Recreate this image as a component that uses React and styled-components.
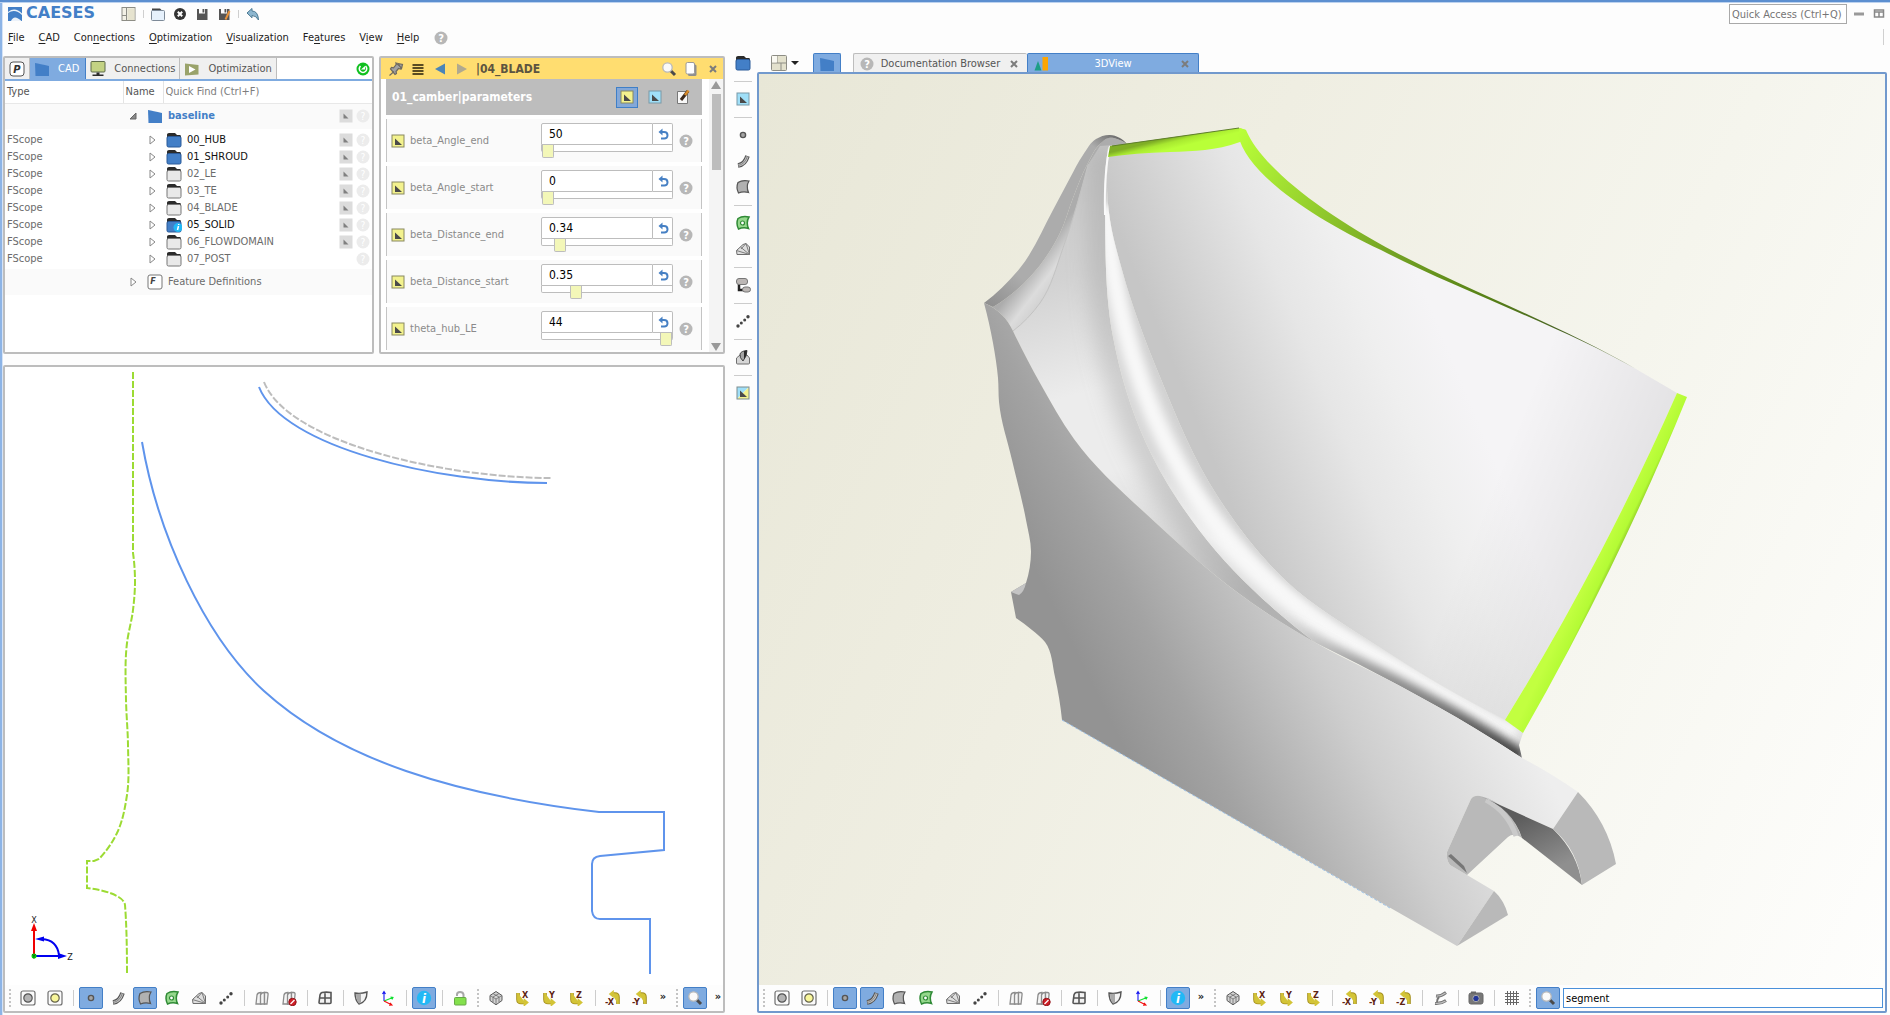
import React from 'react';
import styled, { createGlobalStyle, css } from 'styled-components';

const GlobalStyle = createGlobalStyle`
  * { box-sizing: border-box; }
  body {
    margin: 0;
    background: #fdfdfd;
    color: #3c3c3c;
    font-family: "DejaVu Sans Condensed", "Noto Sans", sans-serif;
    font-size: 11px;
    line-height: 16px;
  }
  button, input { font: inherit; color: inherit; }
  button { padding: 0; border: 0; background: none; cursor: pointer; }
  a { color: inherit; text-decoration: none; }
  svg { display: block; flex: none; }
`;

/* ---------- icons ---------- */

const yellow = '#f3f28e';
const cyan = '#9fdff8';

const triangle = <path d="M5 5.500v6.500h7z" fill="#4a4a4a" />;
const surfacePath = 'M3 3.500C6 1.500 9 1 14 2C11.500 6 12 10 13.500 13.500C10 12.500 7 12.500 3.500 14C1.500 10 1.500 7 3 3.500z';
const sheets = (
  <g fill="#f4f4f4" stroke="#8c8c8c" strokeWidth="1.3">
    <path d="M2 14L3 5Q3.500 2.500 7 2.500V14z" />
    <path d="M6.500 14V5Q7 2.500 10.500 2.500V14z" />
    <path d="M10.500 14V2.500H12.500Q14.500 2.500 14 5L13 14z" />
  </g>
);
const elbowDown = <path d="M3 3v6.500q0 3 3 3h4" fill="none" stroke="#a48f1c" strokeWidth="3.600" />;
const elbowDownLight = <path d="M3 3v6.500q0 3 3 3h4M9.500 10l3 2.500l-3 2.500z" fill="#d3c437" stroke="#d3c437" strokeWidth="1.800" />;
const elbowUp = <path d="M13 14V7q0-3-3-3H7" fill="none" stroke="#a48f1c" strokeWidth="3.600" />;
const elbowUpLight = <path d="M13 14V7q0-3-3-3H7M8 1.500L5 4l3 2.500z" fill="#d3c437" stroke="#d3c437" strokeWidth="1.600" />;

const axisDown = letter => (
  <>
    {elbowDown}{elbowDownLight}
    <text x="7" y="8" fontSize="9" fontWeight="bold" fill="#5e2412">{letter}</text>
  </>
);
const axisUp = letter => (
  <>
    {elbowUp}{elbowUpLight}
    <text x="0" y="15" fontSize="9" fontWeight="bold" fill="#5e2412">-{letter}</text>
  </>
);

const folder = (fill, stroke) => (
  <>
    <path d="M1 5V2.500Q1 1 3 1H9l2 2h3q1 0 1 1.500V6H1z" fill="#2b2b2b" />
    <rect x="1" y="4.500" width="14" height="10.500" rx="1.500" fill={fill} stroke={stroke} />
  </>
);

const icons = {
  layout: (
    <>
      <rect x="1" y="1.500" width="13" height="13" fill="#f3f1e6" stroke="#8d8d85" />
      <path d="M5.500 2v12M1 9.500h4.500" stroke="#8d8d85" />
      <rect x="6.500" y="2.500" width="7" height="11.500" fill="#e6e3cf" />
    </>
  ),
  open: (
    <>
      <path d="M2 4V2.500h8L12 4.500V6H2z" fill="#444" />
      <rect x="1.500" y="4.500" width="13" height="10" rx="1" fill="#e6f1fc" stroke="#7d8a98" />
    </>
  ),
  close: (
    <>
      <circle cx="8" cy="8" r="6" fill="#343434" />
      <path d="M5.800 5.800l4.400 4.400M10.200 5.800l-4.400 4.400" stroke="#fff" strokeWidth="2" />
    </>
  ),
  save: (
    <>
      <path d="M3 3h10.500v11H3z" fill="#555" />
      <path d="M5 2.500h6v5H5z" fill="#fdfdfd" />
      <path d="M8.500 3h1.800v3.500H8.500z" fill="#555" />
    </>
  ),
  saveEdit: (
    <>
      <path d="M3 3h10.500v11H3z" fill="#555" />
      <path d="M5 2.500h6v5H5z" fill="#fdfdfd" />
      <path d="M8.500 3h1.800v3.500H8.500z" fill="#555" />
      <path d="M9.500 13.500L13.500 5" stroke="#e8923a" strokeWidth="2" />
    </>
  ),
  undo: <path d="M2 7L7 2.500V5Q13 5 13.500 14Q11 9.500 7 9.500v2.300z" fill="#8cb6cf" stroke="#4d7b94" />,
  help: (
    <>
      <circle cx="8" cy="8" r="6.500" fill="#b7b7b7" />
      <text x="8" y="12" textAnchor="middle" fontSize="11" fontWeight="bold" fill="#fff">?</text>
    </>
  ),
  helpLight: (
    <>
      <circle cx="8" cy="8" r="6.500" fill="#ececec" />
      <text x="8" y="12" textAnchor="middle" fontSize="10" fill="#fff">?</text>
    </>
  ),
  p: (
    <>
      <rect x="1" y="1" width="14" height="14" rx="3" fill="#fff" stroke="#555" />
      <text x="8" y="12" textAnchor="middle" fontSize="11" fontWeight="bold" fontStyle="italic" fill="#333">P</text>
    </>
  ),
  f: (
    <>
      <rect x="1" y="1" width="14" height="14" rx="2" fill="#fff" stroke="#777" />
      <text x="6" y="10" textAnchor="middle" fontSize="9" fontWeight="bold" fontStyle="italic" fill="#444">F</text>
    </>
  ),
  model: <path d="M1 2Q6 3 15 5v10H1.500z" fill="#437fc7" />,
  monitor: (
    <>
      <rect x="1" y="0.500" width="14" height="10.500" rx="1" fill="#c3d283" stroke="#5d6a4a" />
      <path d="M6.500 11.500h3v2h4V15h-11v-1.500h4z" fill="#2c2c2c" />
    </>
  ),
  optimize: (
    <>
      <path d="M1 2.500L14.500 4v9.500L1 14.500z" fill="#9aa36b" />
      <path d="M5 5l6.500 3.500L5 12z" fill="#fff" />
    </>
  ),
  refresh: (
    <>
      <circle cx="8" cy="8" r="6.500" fill="#10c020" />
      <path d="M10.500 5a3.700 3.700 0 1 1-5 0" fill="none" stroke="#fff" strokeWidth="1.600" />
      <path d="M6 8.500h4V5z" fill="#fff" />
    </>
  ),
  folderBlue: folder('#437fc7', '#2b5a98'),
  folderGray: folder('#e9e9e9', '#777'),
  folderInfo: (
    <>
      {folder('#437fc7', '#2b5a98')}
      <circle cx="12" cy="10.500" r="4.500" fill="#22b8f5" />
      <path d="M12.500 9l-1 4M12.700 7v1" stroke="#fff" strokeWidth="1.500" />
    </>
  ),
  paramGray: (
    <>
      <rect x="1.500" y="1.500" width="13" height="13" fill="#dcdcdc" />
      <path d="M5.500 5.500v5h5z" fill="#808080" />
    </>
  ),
  paramYellow: <><rect x="2" y="2" width="12" height="12" fill={yellow} stroke="#888860" />{triangle}</>,
  paramCyan: <><rect x="2" y="2" width="12" height="12" fill={cyan} stroke="#7a9aa8" />{triangle}</>,
  paramBoth: (
    <>
      <path d="M2 2h12L2 14z" fill={cyan} />
      <path d="M14 2v12H2z" fill={yellow} />
      <rect x="2" y="2" width="12" height="12" fill="none" stroke="#7d8d90" />
      {triangle}
    </>
  ),
  edit: (
    <>
      <path d="M2.500 2.500h10v12h-10z" fill="#f8f8f8" stroke="#777" />
      <path d="M6 11l7-9" stroke="#3d2a1c" strokeWidth="3" />
      <path d="M10 6l3.500-4.500" stroke="#d98b2b" strokeWidth="2.500" />
    </>
  ),
  pin: (
    <g stroke="#6f6a60" strokeWidth="1.200" fill="#a2a2a2">
      <path d="M8 2l5.500 4.500-1 1.500-2-.5-2.500 3 .5 2-1.500 1L2.500 8l1-1.500 2 .3 2.500-3z" />
      <path d="M6 10.500L1.500 14.500" fill="none" />
      <path d="M10 2.500l4.500 1-1 4z" />
    </g>
  ),
  menu: <path d="M2.500 4h11M2.500 7h11M2.500 10h11M2.500 13h11" stroke="#5a4c22" strokeWidth="2" />,
  prev: <path d="M13 2.500v11L3 8z" fill="#4a85b8" />,
  next: <path d="M3 2.500v11L13 8z" fill="#b0a98f" />,
  search: (
    <>
      <path d="M9 9l5 5" stroke="#4a4a4a" strokeWidth="3" />
      <circle cx="6.500" cy="6.500" r="4.700" fill="#fafafa" stroke="#b9b9b9" strokeWidth="1.300" />
    </>
  ),
  copy: (
    <>
      <rect x="5" y="3.500" width="8.500" height="11.500" rx="1.500" fill="#8e8e8e" />
      <rect x="3" y="1.500" width="8.500" height="11.500" rx="1.500" fill="#fff" stroke="#9a9a9a" />
    </>
  ),
  x: <path d="M5 5l6 6M11 5l-6 6" stroke="#7c7c7c" strokeWidth="2" />,
  reset: (
    <>
      <path d="M5 6h4q3.500 0 3.500 3.300T9 12.500H6" fill="none" stroke="#4680c4" strokeWidth="2" />
      <path d="M3.500 6L7.500 2.500v7z" fill="#4680c4" />
    </>
  ),
  point: <circle cx="8" cy="8" r="2.600" fill="#a5a5a5" stroke="#555" strokeWidth="1.400" />,
  curve: (
    <>
      <path d="M3 12.500Q10 11.500 12.500 3" fill="none" stroke="#555" strokeWidth="4.600" />
      <path d="M3.500 12.400Q10 11.500 12.300 3.500" fill="none" stroke="#c4c4c4" strokeWidth="2.600" />
      <path d="M3 12.500Q10 11.500 12.500 3" fill="none" stroke="#777" strokeWidth="0.800" />
    </>
  ),
  surface: <path d={surfacePath} fill="#b1b1b1" stroke="#555" strokeWidth="1.200" />,
  brep: (
    <>
      <path d={surfacePath} fill="#95d88c" stroke="#2f8a35" strokeWidth="1.500" />
      <circle cx="7.500" cy="8" r="2" fill="#fff" stroke="#2f8a35" strokeWidth="1.200" />
    </>
  ),
  mesh: (
    <>
      <path d="M1.500 9.500L8 3.500l3-1 3.500 3.500v7.500L2 13.500z" fill="#dedede" stroke="#6d6d6d" />
      <path d="M1.500 9.500L14.500 13.500M5.500 6l9 7.500M11 2.500l3.500 11M11 2.500L6 8" fill="none" stroke="#7d7d7d" />
    </>
  ),
  group: (
    <>
      <path d="M4 6v7h6" fill="none" stroke="#222" strokeWidth="2.500" />
      <rect x="1.500" y="1.500" width="11" height="6" rx="2.500" fill="#bcb7b5" stroke="#777" />
      <rect x="7.500" y="10" width="8" height="5" rx="2.500" fill="#bcb7b5" stroke="#777" />
    </>
  ),
  dots: (
    <g fill="#444">
      <circle cx="3" cy="13" r="1.700" /><circle cx="6.300" cy="10" r="1.500" />
      <circle cx="9.700" cy="7" r="1.500" /><circle cx="13" cy="3.800" r="1.700" />
    </g>
  ),
  solid: (
    <>
      <path d="M1.500 14V9L5 6h7l2.500 3v5q0 1-1 1h-11q-1 0-1-1z" fill="#d6d6d6" stroke="#6f6f6f" />
      <path d="M5 5Q6 2 12 1.500L11 7L8 12Q4.500 9 5 5z" fill="#a5a5a5" stroke="#444" />
      <path d="M9 2l3-.5L11 7l-2 3z" fill="#2b2b2b" />
    </>
  ),
  blocks: (
    <>
      <rect x="0.500" y="0.500" width="15" height="15" rx="1" fill="#e3e1cd" stroke="#8d8d85" />
      <path d="M1 8h14M6 1v7M10 8v7" stroke="#8d8d85" />
      <path d="M1 1h5v6.500H1z" fill="#faf9f2" />
    </>
  ),
  chart: (
    <>
      <path d="M1.500 14.500L5 5l3.500 9.500z" fill="#1e9e86" />
      <rect x="9.500" y="1" width="5.500" height="13.500" fill="#fca503" />
    </>
  ),
  shade: (
    <>
      <rect x="1" y="1" width="14" height="14" rx="2" fill="#fbfbfb" stroke="#6f6f6f" strokeWidth="1.200" />
      <circle cx="8" cy="8" r="4.200" fill="#b4b4b4" stroke="#555" strokeWidth="1.200" />
    </>
  ),
  light: (
    <>
      <rect x="1" y="1" width="14" height="14" rx="2" fill="#fbfbfb" stroke="#6f6f6f" strokeWidth="1.200" />
      <circle cx="8" cy="8" r="4.200" fill="#f8f69a" stroke="#66644c" strokeWidth="1.200" />
    </>
  ),
  sheets,
  sheetsOff: (
    <>
      {sheets}
      <circle cx="11.500" cy="12" r="3.700" fill="#cf1f27" stroke="#8f1016" />
      <path d="M9.500 14l4-4" stroke="#fff" strokeWidth="1.200" />
    </>
  ),
  panes: (
    <path d="M5 2.500Q9 1.800 14 2.500V12.500q0 1-1 1H3q-1 0-1-1L3 5Q3.500 3 5 2.500zM2.500 8H14M8 2.500v11" fill="#f2f2f2" stroke="#555" strokeWidth="1.600" />
  ),
  shield: (
    <>
      <path d="M2 3Q8 4 14 2Q14 12 6 14Q2 10 2 3z" fill="#f3f3f3" stroke="#555" strokeWidth="1.400" />
      <path d="M3 4l5-.3V13l-2 .5Q3 10 3 4z" fill="#a8a8a8" />
    </>
  ),
  axes: (
    <g fill="none" strokeWidth="1.100">
      <path d="M4 11V2M2.500 4L4 1.500 5.500 4" stroke="#1717f0" />
      <path d="M4 11l9-3.500M10.500 7l2.500.5-1 2" stroke="#10e030" />
      <path d="M4 11l8 4M10 12.800l2 2.200-3 .3" stroke="#f01010" />
    </g>
  ),
  info: (
    <>
      <circle cx="8" cy="8" r="7.200" fill="#22b8f5" />
      <text x="8" y="13" textAnchor="middle" fontSize="13" fontWeight="bold" fontStyle="italic" fill="#fff">i</text>
    </>
  ),
  lock: (
    <>
      <path d="M5 6V4.500Q5 2 8 2t3.500 2.500V7" fill="none" stroke="#a8a8a8" strokeWidth="2" />
      <rect x="2.500" y="7.500" width="11.500" height="7.500" rx="1" fill="#83e04c" stroke="#66a846" />
    </>
  ),
  cube: (
    <>
      <path d="M8 1.500L14 5.500v5L8 14.800 2 10.500v-5z" fill="#d3d3d3" stroke="#5b5b5b" />
      <path d="M2 5.500L8 9l6-3.500M8 9v5.500M5 3.500L11 7v5M11 3.500L5 7v5" fill="none" stroke="#6b6b6b" strokeWidth="0.800" />
    </>
  ),
  downX: axisDown('X'),
  downY: axisDown('Y'),
  downZ: axisDown('Z'),
  upX: axisUp('X'),
  upY: axisUp('Y'),
  upZ: axisUp('Z'),
  clip: (
    <>
      <path d="M4 6Q9 6.500 14 2.500M3 13.500Q9 14 14 10.500" fill="none" stroke="#747474" strokeWidth="3" />
      <path d="M4.500 6Q9 6.300 13.500 3M3.500 13.400Q9 13.800 13.500 11" fill="none" stroke="#c2c2c2" strokeWidth="1.200" />
      <path d="M7 7Q5 9 5 12.500" fill="none" stroke="#747474" strokeWidth="2" />
    </>
  ),
  camera: (
    <>
      <rect x="1" y="3" width="14" height="11" rx="2" fill="#777" stroke="#666" />
      <rect x="3" y="1.500" width="5" height="2" fill="#666" />
      <circle cx="8" cy="8.500" r="3.200" fill="#22369a" stroke="#aaa" />
    </>
  ),
  grid: <path d="M3.500 1v14M6.500 1v14M9.500 1v14M12.500 1v14M1 3.500h14M1 6.500h14M1 9.500h14M1 12.500h14" stroke="#666" />,
  caretDown: <path d="M4 6h8l-4 4z" fill="#222" />,
  minimize: <path d="M3 8h10" stroke="#999" strokeWidth="3" />,
  restore: <path d="M3.500 4h9v7h-9zM3.500 6h9M8 6v5" fill="none" stroke="#888" strokeWidth="1.500" />,
};

function Icon({ name, size = 16 }) {
  return <svg width={size} height={size} viewBox="0 0 16 16" aria-hidden="true">{icons[name]}</svg>;
}

/* ---------- frame ---------- */

const Page = styled.div`
  height: 100vh;
  min-height: 700px;
  display: grid;
  grid-template-rows: auto minmax(0, 1fr);
  padding: 0 3px 2px;
  border-top: 2px solid #5c8fd0;
  box-shadow: inset 0 1px #bcd2ef, inset 2px 0 #8db4e6, inset 3px 0 #d5e3f6;
`;

const Header = styled.header`
  display: flex;
  justify-content: space-between;
  height: 51px;
  padding: 2px 0 0 5px;
`;

const TitleRow = styled.div`
  display: flex;
  align-items: center;
  height: 20px;
`;

const Logo = styled.div`
  display: flex;
  gap: 4px;
  width: 113px;
  height: 14px;
  color: #437fc7;
  font: bold 16px/12px "DejaVu Sans", sans-serif;
`;

const QuickTools = styled.div`
  display: flex;
  align-items: center;
  gap: 6px;
`;

const Divider = styled.span`
  width: 1px;
  height: 8px;
  background: #cfcfcf;
`;

const MenuBar = styled.nav`
  display: flex;
  align-items: center;
  gap: 14px;
  height: 28px;
  color: #222;

  u { text-underline-offset: 2px; }
`;

const HeaderRight = styled.div`
  display: flex;
  flex-direction: column;
  align-items: flex-end;
  gap: 5px;
`;

const WindowTools = styled.div`
  display: flex;
  align-items: center;
  gap: 4px;
  height: 20px;
`;

const QuickAccess = styled.input`
  width: 118px;
  height: 20px;
  padding: 0 0 0 2px;
  border: 1px solid #a9a9a9;
  background: #fff;

  &::placeholder { color: #757575; opacity: 1; }
`;

const EdgeMark = styled.span`
  width: 1px;
  height: 16px;
  margin-right: 3px;
  background: #d0d0d0;
`;

const Workspace = styled.main`
  display: grid;
  grid-template-columns: minmax(0, 722fr) 32px minmax(0, 1130fr);
  min-height: 0;
`;

const LeftSide = styled.div`
  display: grid;
  grid-template-rows: minmax(0, 298fr) minmax(0, 648fr);
  gap: 11px;
  padding-top: 3px;
  min-height: 0;
`;

const UpperPanels = styled.div`
  display: grid;
  grid-template-columns: minmax(0, 371fr) minmax(0, 346fr);
  gap: 5px;
  min-height: 0;
`;

const Panel = styled.section`
  display: flex;
  flex-direction: column;
  min-width: 0;
  min-height: 0;
  overflow: hidden;
  border: 2px solid ${p => (p.$active ? '#7199cd' : '#bdbdbd')};
  border-radius: 2px;
  background: #fff;
`;

/* ---------- object tree ---------- */

const TreeTabs = styled.div`
  display: flex;
  height: 23px;
  padding-right: 1px;
  border-bottom: 2px solid #7fabe0;
`;

const TreeTab = styled.button`
  display: flex;
  align-items: center;
  gap: 8px;
  padding: 0 4px;
  border-right: 1px solid #bdbdbd;
  background: #f0f0f0;
  color: #555;
  ${p => p.$current && css`
    padding-right: 6px;
    background: #7fabe0;
    border-right-color: #437fc7;
    color: #fff;
  `}
`;

const RefreshButton = styled.button`
  margin-left: auto;
`;

const Tree = styled.table`
  width: 100%;
  border-collapse: collapse;
  table-layout: fixed;
  color: #6b6b6b;

  th {
    height: 22px;
    padding: 0 3px 0 2px;
    font-weight: normal;
    text-align: left;
    color: #555;
    border-bottom: 1px solid #e8e8e8;
  }
  th + th { border-left: 1px solid #e4e4e4; }
  td { height: 17px; padding: 0 1px 0 2px; }
`;

const FindInput = styled.input`
  width: 100%;
  height: 16px;
  padding: 0;
  border: 0;
  outline: 0;
  background: none;

  &::placeholder { color: #7d7d7d; opacity: 1; }
`;

const TreeRow = styled.tr`
  ${p => p.$top && css`
    background: #fafafa;
    td { height: 26px; }
  `}
`;

const Spacer = styled.tr`
  td { height: 2px; padding: 0; }
`;

const Node = styled.div`
  display: flex;
  align-items: center;
  gap: 5px;
  padding-left: ${p => (p.$level ? 20 : 1)}px;
  color: ${p => (p.$used ? '#111' : '#6b6b6b')};

  strong { color: #437fc7; }
`;

const Expander = styled.button`
  width: 14px;
  height: 14px;
  margin-right: 2px;
`;

const NodeTools = styled.span`
  display: flex;
  gap: 1px;
  margin-left: auto;
`;

const scopes = [
  { name: '00_HUB', icon: 'folderBlue', used: true, param: true },
  { name: '01_SHROUD', icon: 'folderBlue', used: true, param: true },
  { name: '02_LE', icon: 'folderGray', param: true },
  { name: '03_TE', icon: 'folderGray', param: true },
  { name: '04_BLADE', icon: 'folderGray', param: true },
  { name: '05_SOLID', icon: 'folderInfo', used: true, param: true },
  { name: '06_FLOWDOMAIN', icon: 'folderGray', param: true },
  { name: '07_POST', icon: 'folderGray' },
];

function Arrow({ open }) {
  return (
    <svg width="14" height="14" viewBox="0 0 14 14" aria-hidden="true">
      {open
        ? <path d="M10 4v6H4z" fill="#8a8a8a" stroke="#666" />
        : <path d="M5 3l5 4-5 4z" fill="#fff" stroke="#888" />}
    </svg>
  );
}

function ObjectTree() {
  return (
    <Panel>
      <TreeTabs>
        <TreeTab aria-label="Projects"><Icon name="p" /></TreeTab>
        <TreeTab $current><Icon name="model" /> CAD</TreeTab>
        <TreeTab><Icon name="monitor" /> Connections</TreeTab>
        <TreeTab><Icon name="optimize" /> Optimization</TreeTab>
        <RefreshButton aria-label="Update"><Icon name="refresh" /></RefreshButton>
      </TreeTabs>
      <Tree>
        <colgroup>
          <col width="118" />
          <col width="40" />
          <col />
        </colgroup>
        <thead>
          <tr>
            <th>Type</th>
            <th>Name</th>
            <th><FindInput placeholder="Quick Find (Ctrl+F)" aria-label="Quick Find" /></th>
          </tr>
        </thead>
        <tbody>
          <TreeRow $top>
            <td />
            <td colSpan={2}>
              <Node>
                <Expander aria-label="Collapse baseline"><Arrow open /></Expander>
                <Icon name="model" />
                <strong>baseline</strong>
                <NodeTools><Icon name="paramGray" /><Icon name="helpLight" /></NodeTools>
              </Node>
            </td>
          </TreeRow>
          <Spacer><td colSpan={3} /></Spacer>
          {scopes.map(s => (
            <TreeRow key={s.name}>
              <td>FScope</td>
              <td colSpan={2}>
                <Node $level={1} $used={s.used}>
                  <Expander aria-label={`Expand ${s.name}`}><Arrow /></Expander>
                  <Icon name={s.icon} />
                  {s.name}
                  <NodeTools>{s.param && <Icon name="paramGray" />}<Icon name="helpLight" /></NodeTools>
                </Node>
              </td>
            </TreeRow>
          ))}
          <Spacer><td colSpan={3} /></Spacer>
          <TreeRow $top>
            <td />
            <td colSpan={2}>
              <Node>
                <Expander aria-label="Expand Feature Definitions"><Arrow /></Expander>
                <Icon name="f" />
                Feature Definitions
              </Node>
            </td>
          </TreeRow>
        </tbody>
      </Tree>
    </Panel>
  );
}

/* ---------- parameter editor ---------- */

const EditorHeader = styled.div`
  display: flex;
  align-items: center;
  gap: 6px;
  height: 21px;
  flex: none;
  padding: 0 2px 0 7px;
  background: #ffdd70;

  h2 {
    flex: 1;
    margin: 0;
    font-size: 12px;
    color: #5c5440;
  }
`;

const EditorBody = styled.div`
  display: flex;
  flex: 1;
  min-height: 0;
  padding-left: 5px;
`;

const EditorScroll = styled.div`
  display: flex;
  flex-direction: column;
  gap: 4px;
  flex: 1;
  min-width: 0;
  overflow: hidden;
`;

const GroupHeader = styled.div`
  display: flex;
  align-items: center;
  gap: 6px;
  flex: none;
  height: 36px;
  padding: 0 8px 0 6px;
  background: #bdbdbd;

  h3 {
    flex: 1;
    margin: 0;
    font-size: 12px;
    color: #fff;
  }
`;

const FilterButton = styled.button`
  display: grid;
  place-items: center;
  width: 22px;
  height: 21px;
  ${p => p.$on && css`
    background: #84a8d8;
    border: 1px solid #3f7fc7;
  `}
`;

const ParamRow = styled.div`
  display: flex;
  align-items: center;
  gap: 4px;
  flex: none;
  height: 43px;
  padding: 0 7px 0 3px;
  border: 1px solid #c4c4c4;
  border-width: 0 1px;
  background: #fafafa;

  label { flex: 1; color: #8a8a8a; }
`;

const Field = styled.div`
  display: grid;
  grid-template-columns: minmax(0, 1fr) 20px;
  width: 132px;
  height: 35px;
  margin-right: 1px;
`;

const ValueInput = styled.input`
  width: 100%;
  height: 22px;
  padding: 0 7px;
  border: 1px solid #bdbdbd;
  border-radius: 2px 0 0 0;
  background: #fff;
  color: #000;
  font-size: 12px;
`;

const ResetButton = styled.button`
  display: grid;
  place-items: center;
  border: 1px solid #bdbdbd;
  border-left: 0;
  border-radius: 0 2px 0 0;
  background: #fff;
  height: 22px;
`;

const Slider = styled.input`
  grid-column: 1 / -1;
  appearance: none;
  width: 100%;
  height: 13px;
  margin: 0;
  background: none;

  &::-webkit-slider-runnable-track {
    height: 7px;
    margin-bottom: 6px;
    border: 1px solid #bdbdbd;
    border-top: 0;
    border-radius: 0 0 2px 2px;
    background: #fff;
  }
  &::-webkit-slider-thumb {
    appearance: none;
    width: 12px;
    height: 13px;
    border: 1px solid #bdbdbd;
    border-top: 0;
    border-radius: 0 0 2px 2px;
    background: #f3f7b8;
  }
`;

const ScrollBar = styled.div`
  display: flex;
  flex-direction: column;
  align-items: center;
  width: 14px;
  margin-left: 7px;
  background: #f4f4f4;
`;

const ScrollThumb = styled.div`
  width: 9px;
  height: 76px;
  margin-bottom: auto;
  background: #bdbdbd;
`;

const parameters = [
  { name: 'beta_Angle_end', value: '50', position: 0 },
  { name: 'beta_Angle_start', value: '0', position: 0 },
  { name: 'beta_Distance_end', value: '0.34', position: 10 },
  { name: 'beta_Distance_start', value: '0.35', position: 24 },
  { name: 'theta_hub_LE', value: '44', position: 100 },
];

function ParameterEditor() {
  return (
    <Panel>
      <EditorHeader>
        <Icon name="pin" /><Icon name="menu" /><Icon name="prev" /><Icon name="next" />
        <h2>|04_BLADE</h2>
        <Icon name="search" /><Icon name="copy" /><Icon name="x" />
      </EditorHeader>
      <EditorBody>
        <EditorScroll>
          <GroupHeader>
            <h3>01_camber|parameters</h3>
            <FilterButton $on aria-label="Design variables"><Icon name="paramYellow" /></FilterButton>
            <FilterButton aria-label="Parameters"><Icon name="paramCyan" /></FilterButton>
            <FilterButton aria-label="Edit"><Icon name="edit" /></FilterButton>
          </GroupHeader>
          {parameters.map(p => (
            <ParamRow key={p.name}>
              <Icon name="paramYellow" />
              <label htmlFor={p.name}>{p.name}</label>
              <Field>
                <ValueInput id={p.name} defaultValue={p.value} />
                <ResetButton aria-label={`Reset ${p.name}`}><Icon name="reset" /></ResetButton>
                <Slider type="range" aria-label={`${p.name} slider`} defaultValue={p.position} />
              </Field>
              <Icon name="help" />
            </ParamRow>
          ))}
        </EditorScroll>
        <ScrollBar>
          <svg width="12" height="15" viewBox="0 0 12 15"><path d="M6 2l5 8H1z" fill="#999" /></svg>
          <ScrollThumb />
          <svg width="12" height="10" viewBox="0 0 12 10"><path d="M6 9l5-8H1z" fill="#999" /></svg>
        </ScrollBar>
      </EditorBody>
    </Panel>
  );
}

/* ---------- view toolbars ---------- */

const ToolBar = styled.div`
  display: flex;
  align-items: center;
  gap: 3px;
  flex: none;
  height: 26px;
  padding: 0 2px;
  background: #fdfdfd;
  overflow: hidden;
`;

const ToolButton = styled.button`
  display: grid;
  place-items: center;
  flex: none;
  width: 24px;
  height: 22px;
  border-radius: 2px;
  ${p => p.$on && css`
    background: #7fabe0;
    border: 1px solid #437fc7;
  `}
`;

const ToolSeparator = styled.span`
  flex: none;
  width: 6px;
  height: 16px;
  background: linear-gradient(#ccc, #ccc) center / 1px 100% no-repeat;
`;

const Grip = styled.span`
  flex: none;
  width: 6px;
  height: 18px;
  background: repeating-linear-gradient(#c4c4c4 0 2px, transparent 2px 4px) center / 2px 100% no-repeat;
`;

const MoreButton = styled.button`
  flex: none;
  width: 16px;
  height: 22px;
  padding-bottom: 2px;
  color: #222;
  font-size: 11px;
  font-weight: bold;
`;

const SearchField = styled.input`
  flex: 1;
  min-width: 0;
  height: 20px;
  padding: 0 2px;
  border: 1px solid #4a90d9;
  background: #fff;
  color: #000;
`;

// '|' draws a separator, ':' a grip, '>' the overflow button; a leading '*' marks an active tool
function Tools({ items }) {
  return items.split(' ').map((item, i) => {
    if (item === '|') return <ToolSeparator key={i} />;
    if (item === ':') return <Grip key={i} />;
    if (item === '>') return <MoreButton key={i} aria-label="More tools">»</MoreButton>;
    const name = item.replace('*', '');
    return (
      <ToolButton key={i} $on={item[0] === '*'} aria-label={name}>
        <Icon name={name} />
      </ToolButton>
    );
  });
}

/* ---------- drawings ---------- */

const Canvas = styled.div`
  flex: 1;
  min-height: 0;
  background: ${p => (p.$shaded
    ? 'linear-gradient(115deg, #e8e7d7 0%, #efeee2 35%, #f5f5ed 65%, #fefefd 100%)'
    : '#fff')};

  svg { width: 100%; height: 100%; }
`;

const unit = (a, b) => {
  const len = Math.hypot(b[0] - a[0], b[1] - a[1]) || 1;
  return [(b[0] - a[0]) / len, (b[1] - a[1]) / len, len];
};
// end tangent: the neighbour's tangent mirrored about the chord
const mirror = (u, t) => {
  const dot = 2 * (u[0] * t[0] + u[1] * t[1]);
  return [dot * u[0] - t[0], dot * u[1] - t[1]];
};

// cubic segments through the points, with the tangents of the circle through each three of them
function smooth(pts) {
  const u = pts.slice(1).map((p, i) => unit(pts[i], p));
  const t = pts.map((_, i) => {
    if (i === 0 || i === pts.length - 1) return null;
    const [a, b] = [u[i - 1], u[i]];
    return unit([0, 0], [a[0] * b[2] + b[0] * a[2], a[1] * b[2] + b[1] * a[2]]);
  });
  t[0] = mirror(u[0], t[1] || u[0]);
  t[pts.length - 1] = mirror(u[u.length - 1], t[pts.length - 2]);
  return u.map(([, , len], i) => {
    const k = len / 3;
    const [p, q] = [pts[i], pts[i + 1]];
    const c1 = [p[0] + t[i][0] * k, p[1] + t[i][1] * k].map(v => v.toFixed(1));
    const c2 = [q[0] - t[i + 1][0] * k, q[1] - t[i + 1][1] * k].map(v => v.toFixed(1));
    return `C${c1} ${c2} ${q}`;
  }).join('');
}
const from = pts => `M${pts[0]}${smooth(pts)}`;
const join = pts => `L${pts[0]}${smooth(pts)}`;
const back = pts => [...pts].reverse();

const shroudCurve = [
  [133, 553], [135, 580], [133, 610], [127, 643], [126, 700], [128, 745], [127, 795], [117, 833], [99, 859],
];

function MeridionalView() {
  return (
    <svg viewBox="5 367 718 618" role="img" aria-label="Meridional contour">
      <g fill="none" strokeWidth="2">
        <path
          d={`M133 372V553${smooth(shroudCurve)}L94 861H87V888C105 890 124 896 125 905Q127 930 127 973`}
          stroke="#9cdb33"
          strokeDasharray="7 2"
        />
        <path d="M264 382C288 443 445 478 552 478" stroke="#bdbdbd" strokeDasharray="7 2" />
        <path d="M259 387C283 448 440 483 547 483" stroke="#5f94ec" />
        <path
          d="M142 442C158 535 205 637 264 691C340 760 455 795 599 812H664V850L600 856Q592 857 592 864V911Q593 919 600 919H650V974"
          stroke="#5f94ec"
        />
      </g>
      <path d="M34 956V930" stroke="#f00000" strokeWidth="2" />
      <path d="M34 923l3 8h-6z" fill="#f00000" />
      <path d="M34 956H60M59 955Q57 940 42 939" fill="none" stroke="#0000f0" strokeWidth="2" />
      <path d="M58 953l9 3-9 3zM35 939l9-2.500v5z" fill="#0000f0" />
      <circle cx="34" cy="956" r="2.500" fill="#00e000" />
      <g fontSize="9" fill="#222" textAnchor="middle">
        <text x="34" y="923">X</text>
        <text x="70" y="960">Z</text>
        <text x="34" y="959" fontSize="7">Y</text>
      </g>
    </svg>
  );
}

const leftRim = [
  [984, 303], [993, 343], [998, 378], [999, 402], [1012, 460],
  [1026, 520], [1031, 552], [1026, 583],
];
const tipEdge = [[984, 303], [1002, 315], [1013, 331]];
const faceTop = [
  [1013, 331], [1040, 383], [1074, 439], [1156, 523], [1252, 603], [1316, 643], [1400, 686], [1476, 729], [1522, 758],
];
const rimOuter = [
  [984, 303], [1020, 268], [1053, 210], [1070, 178], [1083, 155],
  [1096, 139], [1110, 135], [1127, 144],
];
const rimInner = [
  [993, 307], [1030, 277], [1060, 233], [1073, 198],
  [1088, 163], [1100, 144], [1109, 138], [1117, 139], [1127, 144],
];
const grooveLine = [
  [1013, 331], [1040, 303], [1063, 248], [1082, 187], [1088, 165],
];
const filletLeft = [
  [1108, 148], [1105, 177], [1105, 210], [1113, 337], [1146, 443],
  [1199, 530], [1275, 610], [1316, 643],
];
const filletRight = [
  [1110, 146], [1107, 175], [1110, 220], [1122, 270], [1160, 377],
  [1218, 497], [1285, 580], [1379, 647], [1505, 720],
];
const ridge = [
  [1107, 205], [1124, 325], [1165, 440], [1232, 545], [1330, 630], [1400, 670], [1515, 736],
];
const trailLeft = [[1677, 393], [1600, 553], [1505, 720]];
const trailRight = [[1687, 397], [1611, 567], [1523, 733]];
const hubEdge = [[1522, 758], [1552, 775], [1578, 792]];
const footEdge = [[1016, 618], [1032, 630], [1045, 642], [1055, 677], [1062, 720]];
const bladePath = `M1110 146L1239 130L1238 135C1247 174 1311 217 1381 250C1452 287 1560 326 1636 369L1677 393${join(trailLeft)}${join(back(filletRight))}z`;

function SolidView() {
  return (
    <svg viewBox="759 74 1126 911" role="img" aria-label="Impeller segment">
      <defs>
        <linearGradient id="face" gradientUnits="userSpaceOnUse" x1="1100" y1="700" x2="1428" y2="536">
          <stop offset="0" stopColor="#939393" />
          <stop offset=".2" stopColor="#a3a3a3" />
          <stop offset=".42" stopColor="#bcbcbc" />
          <stop offset=".58" stopColor="#cecece" />
          <stop offset=".75" stopColor="#dcdcdc" />
          <stop offset="1" stopColor="#eeeeee" />
        </linearGradient>
        <linearGradient id="blade" gradientUnits="userSpaceOnUse" x1="1130" y1="260" x2="1370" y2="160">
          <stop offset="0" stopColor="#c6c6c6" />
          <stop offset=".25" stopColor="#d6d6d6" />
          <stop offset=".5" stopColor="#e6e6e6" />
          <stop offset=".75" stopColor="#efefef" />
          <stop offset="1" stopColor="#f5f4f6" />
        </linearGradient>
        <linearGradient id="bladeEdge" gradientUnits="userSpaceOnUse" x1="1510" y1="440" x2="1660" y2="500">
          <stop offset="0" stopColor="#000" stopOpacity="0" />
          <stop offset="1" stopColor="#000" stopOpacity=".08" />
        </linearGradient>
        <linearGradient id="hub" gradientUnits="userSpaceOnUse" x1="1090" y1="150" x2="1210" y2="600">
          <stop offset="0" stopColor="#c6c6c6" />
          <stop offset=".25" stopColor="#d2d2d2" />
          <stop offset=".5" stopColor="#ececec" />
          <stop offset=".68" stopColor="#ececec" />
          <stop offset=".85" stopColor="#d8d8d8" />
          <stop offset="1" stopColor="#bcbcbc" />
        </linearGradient>
        <linearGradient id="groove" gradientUnits="userSpaceOnUse" x1="1020" y1="280" x2="1046" y2="300">
          <stop offset="0" stopColor="#acacac" />
          <stop offset=".6" stopColor="#dcdcdc" />
          <stop offset="1" stopColor="#d0d0d0" />
        </linearGradient>
        <linearGradient id="rim" gradientUnits="userSpaceOnUse" x1="984" y1="303" x2="1120" y2="135">
          <stop offset="0" stopColor="#8f8f8f" />
          <stop offset=".2" stopColor="#acacac" />
          <stop offset=".88" stopColor="#acacac" />
          <stop offset="1" stopColor="#666" />
        </linearGradient>
        <linearGradient id="fillet" gradientUnits="userSpaceOnUse" x1="1300" y1="560" x2="1260" y2="615">
          <stop offset="0" stopColor="#d8d8d8" />
          <stop offset=".5" stopColor="#eeeeee" />
          <stop offset="1" stopColor="#d2d2d2" />
        </linearGradient>
        <linearGradient id="under" gradientUnits="userSpaceOnUse" x1="1280" y1="620" x2="1522" y2="758">
          <stop offset="0" stopColor="#b4b4b4" stopOpacity="0" />
          <stop offset=".3" stopColor="#a4a4a4" />
          <stop offset=".6" stopColor="#808080" />
          <stop offset="1" stopColor="#3c3c3c" />
        </linearGradient>
        <linearGradient id="shroud" gradientUnits="userSpaceOnUse" x1="1240" y1="130" x2="1560" y2="330">
          <stop offset="0" stopColor="#b9ff38" />
          <stop offset=".2" stopColor="#9edb30" />
          <stop offset=".5" stopColor="#75a524" />
          <stop offset=".8" stopColor="#567f17" />
          <stop offset="1" stopColor="#4a6426" />
        </linearGradient>
        <linearGradient id="leading" gradientUnits="userSpaceOnUse" x1="1172" y1="137" x2="1176" y2="153">
          <stop offset="0" stopColor="#7fae26" />
          <stop offset=".3" stopColor="#a8e830" />
          <stop offset=".7" stopColor="#b9ff38" />
        </linearGradient>
        <linearGradient id="trailing" gradientUnits="userSpaceOnUse" x1="1592" y1="566" x2="1613" y2="576">
          <stop offset="0" stopColor="#c2ff40" />
          <stop offset=".6" stopColor="#b4fb35" />
          <stop offset="1" stopColor="#6c9c1c" />
        </linearGradient>
        <linearGradient id="slot" gradientUnits="userSpaceOnUse" x1="1530" y1="812" x2="1556" y2="868">
          <stop offset="0" stopColor="#5c5c5c" />
          <stop offset="1" stopColor="#8f8f8f" />
        </linearGradient>
        <filter id="soft4" x="-20%" y="-20%" width="140%" height="140%"><feGaussianBlur stdDeviation="4" /></filter>
        <filter id="soft10" x="-20%" y="-20%" width="140%" height="140%"><feGaussianBlur stdDeviation="10" /></filter>
        <clipPath id="hubClip">
          <path d={`${from(grooveLine)}L1100 144L1108 138L1127 144L1110 146${join(filletLeft)}${join(back(faceTop.slice(0, 6)))}z`} />
        </clipPath>
        <clipPath id="filletClip">
          <path d={`${from(filletLeft)}${join(faceTop.slice(5))}L1519 745L1523 733L1505 720${join(back(filletRight))}z`} />
        </clipPath>
      </defs>

      {/* blade surface */}
      <path d={bladePath} fill="url(#blade)" />
      <path d={bladePath} fill="url(#bladeEdge)" />

      {/* hub surface */}
      <g clipPath="url(#hubClip)">
        <rect x="1000" y="120" width="340" height="540" fill="url(#hub)" />
        <path d={from(filletLeft)} fill="none" stroke="#a0a0a0" strokeOpacity=".4" strokeWidth="36" filter="url(#soft10)" />
      </g>

      {/* rim at the inlet */}
      <path d={`${from(rimInner)}L1100 146${join(back(grooveLine))}${join(back(tipEdge))}z`} fill="url(#groove)" />
      <path d={from(grooveLine)} fill="none" stroke="#c2c2c2" />
      <path d={`${from(rimOuter)}${join(back(rimInner))}z`} fill="url(#rim)" />

      {/* fillet between hub and blade */}
      <g clipPath="url(#filletClip)">
        <rect x="1090" y="130" width="450" height="640" fill="url(#fillet)" />
        <path d={from(filletRight)} fill="none" stroke="#d0d0d0" strokeWidth="10" filter="url(#soft4)" />
        <path d={from(ridge)} fill="none" stroke="#f8f8f8" strokeWidth="18" filter="url(#soft4)" />
        <path d={from(faceTop.slice(3))} fill="none" stroke="url(#under)" strokeWidth="16" filter="url(#soft4)" />
      </g>
      <path d="M1110 146Q1104 170 1105 215" fill="none" stroke="#fafafa" strokeWidth="2" />

      {/* hub front face */}
      <path
        d={`${from(leftRim)}L1011 592L1016 618${smooth(footEdge)}L1457 946L1494 891L1467 875L1450 865Q1446 860 1447 852L1471 799Q1474 795 1480 796L1553 829L1578 792${join(back(hubEdge))}${join(back(faceTop))}${join(back(tipEdge))}z`}
        fill="url(#face)"
      />
      <path d="M1062 720L1390 908" stroke="#9cc0e6" strokeDasharray="3 2" />
      <path d="M1011 592L1026 583Q1024 592 1019 595z" fill="#c4c4c4" />

      {/* root slot and end caps */}
      <path d="M1471 799Q1474 795 1480 796Q1508 802 1522 838Q1514 832 1508 837L1467 875L1450 865Q1446 860 1447 852z" fill="#b9b9b9" />
      <path d="M1486 800Q1508 812 1516 836" fill="none" stroke="#cacaca" strokeWidth="5" />
      <path d="M1448 856L1467 873L1464 866L1451 854z" fill="#777" />
      <path d="M1480 796L1553 829Q1578 853 1582 885L1522 838Q1512 808 1480 796z" fill="url(#slot)" />
      <path d="M1578 792Q1608 822 1616 864L1582 885Q1578 850 1553 829z" fill="#b9b9b9" />
      <path d="M1494 891Q1504 900 1508 915L1457 946z" fill="#b9b9b9" />

      {/* trimmed blade edges */}
      <path d="M1108 157L1110 146L1239 128L1246 130L1240 142C1215 151 1195 151 1170 152Q1135 153 1108 157z" fill="url(#leading)" />
      <path d="M1112 146L1239 128" stroke="#5f7f2c" />
      <path
        d="M1240 128L1246 130C1262 168 1325 215 1395 252C1465 289 1560 325 1636 369C1560 326 1452 287 1381 250C1311 217 1247 174 1238 135z"
        fill="url(#shroud)"
      />
      <path d={`${from(trailLeft)}${join(back(trailRight))}z`} fill="url(#trailing)" />
    </svg>
  );
}

/* ---------- creation bar and view tabs ---------- */

const CreateBar = styled.div`
  display: flex;
  flex-direction: column;
  align-items: center;
  margin-top: -3px;
  padding-left: 4px;
`;

const CreateButton = styled.button`
  display: grid;
  place-items: center;
  width: 24px;
  height: 26px;
`;

const CreateSeparator = styled.span`
  width: 18px;
  height: 10px;
  background: linear-gradient(#ccc, #ccc) center / 100% 1px no-repeat;
`;

const createItems = [
  ['folderBlue'], ['paramCyan'], ['point', 'curve', 'surface'], ['brep', 'mesh'],
  ['group'], ['dots'], ['solid'], ['paramBoth'],
];

const RightSide = styled.div`
  display: flex;
  flex-direction: column;
  min-width: 0;
  min-height: 0;

  ${Panel} { flex: 1; }
`;

const ViewTabs = styled.div`
  display: flex;
  height: 19px;
  flex: none;
  padding-left: 14px;
`;

const LayoutButton = styled.button`
  display: flex;
  align-items: center;
  width: 42px;
`;

const ViewTab = styled.div`
  display: flex;
  align-items: center;
  gap: 5px;
  width: ${p => p.$width}px;
  padding: 2px 5px 0;
  border: 1px solid #bdbdbd;
  border-width: 1px 0 0 1px;
  border-radius: 2px 2px 0 0;
  background: #f0f0f0;
  color: #555;
  ${p => p.$current && css`
    border: 1px solid #437fc7;
    border-bottom: 0;
    background: #7fabe0;
    color: #fff;
  `}
  ${p => p.$alone && css`
    margin-right: 12px;
  `}

  a { flex: 1; text-align: center; }
`;

function App() {
  return (
    <>
      <GlobalStyle />
      <Page>
        <Header>
          <div>
            <TitleRow>
              <Logo>
                <svg width="14" height="14" viewBox="0 0 14 14" aria-hidden="true">
                  <path d="M0 0h14v14H0z" fill="#437fc7" />
                  <path d="M0 6Q7 1 14 8V6.500Q7-.5 0 5zM3 14Q6 7 13.500 14z" fill="#fff" opacity=".9" />
                </svg>
                CAESES
              </Logo>
              <QuickTools>
                <Icon name="layout" />
                <Divider />
                <Icon name="open" />
                <Icon name="close" />
                <Icon name="save" />
                <Icon name="saveEdit" />
                <Divider />
                <Icon name="undo" />
              </QuickTools>
            </TitleRow>
            <MenuBar>
              <a href="#file"><u>F</u>ile</a>
              <a href="#cad"><u>C</u>AD</a>
              <a href="#connections">Con<u>n</u>ections</a>
              <a href="#optimization"><u>O</u>ptimization</a>
              <a href="#visualization"><u>V</u>isualization</a>
              <a href="#features">Fe<u>a</u>tures</a>
              <a href="#view">V<u>i</u>ew</a>
              <a href="#help"><u>H</u>elp</a>
              <Icon name="help" />
            </MenuBar>
          </div>
          <HeaderRight>
            <WindowTools>
              <QuickAccess placeholder="Quick Access (Ctrl+Q)" aria-label="Quick Access" />
              <Icon name="minimize" />
              <Icon name="restore" />
            </WindowTools>
            <EdgeMark />
          </HeaderRight>
        </Header>

        <Workspace>
          <LeftSide>
            <UpperPanels>
              <ObjectTree />
              <ParameterEditor />
            </UpperPanels>
            <Panel>
              <Canvas><MeridionalView /></Canvas>
              <ToolBar>
                <Tools items=": shade light | *point curve *surface brep mesh dots | sheets sheetsOff | panes | shield axes | *info | lock : cube downX downY downZ | upX upY > : *search >" />
              </ToolBar>
            </Panel>
          </LeftSide>

          <CreateBar>
            {createItems.map((group, i) => (
              <React.Fragment key={group[0]}>
                {i > 0 && <CreateSeparator />}
                {group.map(name => (
                  <CreateButton key={name} aria-label={name}><Icon name={name} /></CreateButton>
                ))}
              </React.Fragment>
            ))}
          </CreateBar>

          <RightSide>
            <ViewTabs>
              <LayoutButton aria-label="Window layout"><Icon name="blocks" /><Icon name="caretDown" /></LayoutButton>
              <ViewTab $current $alone $width={28}><Icon name="model" /></ViewTab>
              <ViewTab $width={174}>
                <Icon name="help" /><a href="#documentation">Documentation Browser</a><Icon name="x" />
              </ViewTab>
              <ViewTab $current $width={172}>
                <Icon name="chart" /><a href="#3dview">3DView</a><Icon name="x" />
              </ViewTab>
            </ViewTabs>
            <Panel $active>
              <Canvas $shaded><SolidView /></Canvas>
              <ToolBar>
                <Tools items=": shade light | *point *curve surface brep mesh dots | sheets sheetsOff | panes | shield axes | *info > : cube downX downY downZ | upX upY upZ | clip | camera | grid : *search" />
                <SearchField defaultValue="segment" aria-label="Search objects" />
              </ToolBar>
            </Panel>
          </RightSide>
        </Workspace>
      </Page>
    </>
  );
}

export default App;
